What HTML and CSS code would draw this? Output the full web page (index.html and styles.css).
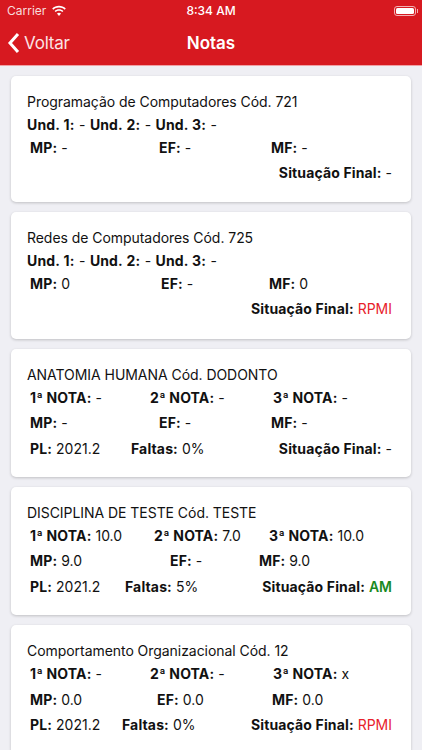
FILE: index.html
```html
<!DOCTYPE html>
<html lang="pt-BR">
<head>
    <meta charset="UTF-8">
    <meta name="viewport" content="width=device-width, initial-scale=1.0">
    <title>Notas</title>
    <link rel="stylesheet" href="styles.css">
</head>
<body>
    <div class="header">
        <div class="status">
            <div class="status-left">
                <span>Carrier</span>
                <svg class="wifi" width="16" height="12" viewBox="0 0 16 12">
                    <path d="M8 2.4c2.2 0 4.200.9 5.700 2.300l1.100-1.200C13 1.800 10.600.8 8 .8S3 1.800 1.200 3.500l1.100 1.200C3.800 3.300 5.800 2.400 8 2.400z" fill="#fff"/>
                    <path d="M8 5.800c1.300 0 2.400.5 3.300 1.300l1.100-1.200C11.200 4.800 9.700 4.200 8 4.200s-3.200.6-4.400 1.700l1.100 1.200C5.600 6.300 6.700 5.800 8 5.800z" fill="#fff"/>
                    <path d="M8 7.700c-.8 0-1.500.3-2 .8L8 11l2-2.500c-.5-.5-1.200-.8-2-.8z" fill="#fff"/>
                </svg>
            </div>
            <div class="status-time">8:34 AM</div>
            <div class="status-right">
                <div class="battery"><div class="battery-fill"></div></div>
                <div class="battery-cap"></div>
            </div>
        </div>
        <div class="navbar">
            <div class="back">
                <svg width="13" height="22" viewBox="0 0 13 22">
                    <path d="M11 2 L3 11 L11 20" fill="none" stroke="#fff" stroke-width="3"/>
                </svg>
                <span>Voltar</span>
            </div>
            <div class="nav-title">Notas</div>
        </div>
    </div>

    <div class="list">
        <div class="card">
            <div class="name">Programação de Computadores Cód. 721</div>
            <div class="und"><b>Und. 1:</b> - <b>Und. 2:</b> - <b>Und. 3:</b> -</div>
            <div class="row first cols-a">
                <div><b>MP:</b> -</div>
                <div><b>EF:</b> -</div>
                <div><b>MF:</b> -</div>
            </div>
            <div class="row"><div class="end"><b>Situação Final:</b> -</div></div>
        </div>

        <div class="card">
            <div class="name">Redes de Computadores Cód. 725</div>
            <div class="und"><b>Und. 1:</b> - <b>Und. 2:</b> - <b>Und. 3:</b> -</div>
            <div class="row first cols-b">
                <div><b>MP:</b> 0</div>
                <div><b>EF:</b> -</div>
                <div><b>MF:</b> 0</div>
            </div>
            <div class="row"><div class="end"><b>Situação Final:</b> <span class="red">RPMI</span></div></div>
        </div>

        <div class="card tall">
            <div class="name">ANATOMIA HUMANA Cód. DODONTO</div>
            <div class="row first cols-c">
                <div><b>1ª NOTA:</b> -</div>
                <div><b>2ª NOTA:</b> -</div>
                <div><b>3ª NOTA:</b> -</div>
            </div>
            <div class="row cols-a">
                <div><b>MP:</b> -</div>
                <div><b>EF:</b> -</div>
                <div><b>MF:</b> -</div>
            </div>
            <div class="row">
                <div class="pl"><b>PL:</b> 2021.2</div>
                <div><b>Faltas:</b> 0%</div>
                <div class="end"><b>Situação Final:</b> -</div>
            </div>
        </div>

        <div class="card tall">
            <div class="name">DISCIPLINA DE TESTE Cód. TESTE</div>
            <div class="row first cols-d">
                <div><b>1ª NOTA:</b> 10.0</div>
                <div><b>2ª NOTA:</b> 7.0</div>
                <div><b>3ª NOTA:</b> 10.0</div>
            </div>
            <div class="row cols-e">
                <div><b>MP:</b> 9.0</div>
                <div><b>EF:</b> -</div>
                <div><b>MF:</b> 9.0</div>
            </div>
            <div class="row">
                <div class="pl pl-wide"><b>PL:</b> 2021.2</div>
                <div><b>Faltas:</b> 5%</div>
                <div class="end"><b>Situação Final:</b> <span class="green">AM</span></div>
            </div>
        </div>

        <div class="card tall">
            <div class="name">Comportamento Organizacional Cód. 12</div>
            <div class="row first cols-c">
                <div><b>1ª NOTA:</b> -</div>
                <div><b>2ª NOTA:</b> -</div>
                <div><b>3ª NOTA:</b> x</div>
            </div>
            <div class="row cols-f">
                <div><b>MP:</b> 0.0</div>
                <div><b>EF:</b> 0.0</div>
                <div><b>MF:</b> 0.0</div>
            </div>
            <div class="row">
                <div class="pl pl-wider"><b>PL:</b> 2021.2</div>
                <div><b>Faltas:</b> 0%</div>
                <div class="end"><b>Situação Final:</b> <span class="red">RPMI</span></div>
            </div>
        </div>
    </div>
</body>
</html>
```

FILE: styles.css
```css
body {
    margin: 0;
    height: 750px;
    overflow: hidden;
    background-color: #efeff4;
    color: #111;
    font-family: Inter, "Liberation Sans", sans-serif;
    font-size: 14px;
}
b {
    font-weight: 700;
    letter-spacing: 0.14px;
}
.header {
    height: 65px;
    background-color: #d71920;
    border-bottom: 1px solid #f0a0a4;
    color: white;
}
.status {
    display: flex;
    align-items: center;
    justify-content: space-between;
    height: 21px;
    padding: 0 4px;
    font-size: 12px;
}
.status-left {
    display: flex;
    align-items: center;
    gap: 5px;
    width: 120px;
    padding-left: 3px;
    box-sizing: border-box;
    color: #f8dcdd;
}
.status-time {
    font-weight: 500;
}
.status-right {
    display: flex;
    align-items: center;
    justify-content: flex-end;
    width: 120px;
    gap: 1px;
}
.battery {
    width: 22px;
    height: 10px;
    padding: 1px;
    box-sizing: border-box;
    border: 1px solid #f2b0b3;
    border-radius: 3px;
}
.battery-fill {
    height: 100%;
    background-color: white;
    border-radius: 1.500px;
}
.battery-cap {
    width: 1px;
    height: 4px;
    background-color: #f2b0b3;
}
.navbar {
    display: grid;
    grid-template-columns: 1fr auto 1fr;
    align-items: center;
    height: 44px;
    padding: 0 7px;
}
.back {
    display: flex;
    align-items: center;
    gap: 4px;
    font-size: 17px;
    letter-spacing: -0.2px;
    color: #fbe3e4;
}
.nav-title {
    font-size: 17px;
    font-weight: 600;
}
.list {
    display: flex;
    flex-direction: column;
    gap: 10px;
    padding: 10px 11px;
}
.card {
    flex-shrink: 0;
    box-sizing: border-box;
    height: 126.300px;
    padding: 17px 19px 0 16px;
    background-color: white;
    border-radius: 5px;
    box-shadow: 0 1px 3px rgba(0,0,0,0.2);
}
.card.tall {
    height: 128.400px;
}
.name {
    line-height: 18px;
    letter-spacing: -0.05px;
    margin-bottom: 5px;
}
.und {
    line-height: 18px;
    word-spacing: 0.5px;
}
.row {
    display: flex;
    align-items: center;
    margin-top: 7.500px;
    padding-left: 3px;
    line-height: 18px;
}
.row.first {
    margin-top: 4.500px;
}
.cols-a {
    display: grid;
    grid-template-columns: 129px 112px auto;
}
.cols-b {
    display: grid;
    grid-template-columns: 131px 108px auto;
}
.cols-c {
    display: grid;
    grid-template-columns: 120px 123px auto;
}
.cols-d {
    display: grid;
    grid-template-columns: 124px 115px auto;
}
.cols-e {
    display: grid;
    grid-template-columns: 140px 89px auto;
}
.cols-f {
    display: grid;
    grid-template-columns: 127px 115px auto;
}
.pl {
    width: 101px;
}
.pl-wide {
    width: 95px;
}
.pl-wider {
    width: 92px;
}
.end {
    margin-left: auto;
}
.red {
    color: #e8212b;
}
.green {
    color: #1a8a1f;
    font-weight: 600;
}
```
